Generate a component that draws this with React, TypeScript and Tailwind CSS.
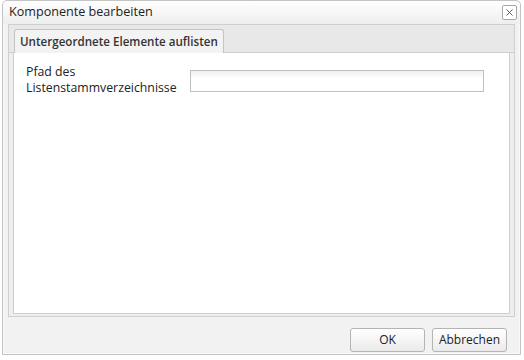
import { X } from 'lucide-react'

export default function App() {
  return (
    <div
      className="w-[524px] h-[360px] bg-white pl-[2px] pr-[3px] pb-[5px]"
      style={{ fontFamily: '"Open Sans", "Noto Sans", sans-serif' }}
    >
      <div className="h-full flex flex-col bg-[#f2f2f2] border border-[#c4c4c4] rounded-t-[5px] shadow-[inset_0_0_0_1px_#fafafa]">
        {/* title bar */}
        <div className="h-[23px] shrink-0 flex items-center justify-between pl-[6px] pr-[3px] bg-gradient-to-b from-white to-[#eeeeee] rounded-t-[5px]">
          <span className="text-[12.6px] text-[#222] leading-none">Komponente bearbeiten</span>
          <button className="w-[15px] h-[15px] flex items-center justify-center border border-[#a8a8a8] rounded-[2px] bg-white text-[#555]">
            <X size={11} strokeWidth={2} />
          </button>
        </div>

        <div className="flex-1 flex flex-col px-[5px]">
          <div className="flex-1 flex flex-col border border-[#cfcfcf]">
            {/* tab strip */}
            <div className="h-[28px] shrink-0 flex items-end pl-[5px] bg-[#e8e8e8] border-b border-[#cfcfcf]">
              <div className="h-[24px] px-[5px] flex items-center bg-[#f3f3f3] border border-b-0 border-[#c4c4c4] rounded-t-[3px] -mb-px">
                <span className="text-[11.6px] font-semibold text-[#333]">Untergeordnete Elemente auflisten</span>
              </div>
            </div>
            {/* content */}
            <div className="flex-1 bg-[#eeeeee] px-[4px] pb-[2px]">
              <div className="h-full bg-white border border-t-0 border-[#cfcfcf] px-[12px] pt-[11px]">
                <div className="flex items-start">
                  <div className="w-[164px] text-[12.3px] leading-[16px] text-[#222]">
                    Pfad des
                    <br />
                    Listenstammverzeichnisse
                  </div>
                  <input
                    className="mt-[6px] w-[294px] h-[22px] border border-[#bfbfbf] bg-gradient-to-b from-[#f0f0f0] to-white to-40% outline-none"
                    type="text"
                  />
                </div>
              </div>
            </div>
          </div>

          {/* footer */}
          <div className="h-[37px] shrink-0 flex items-end justify-end gap-[7px] pr-[8px] pb-[2px]">
            <button className="w-[75px] h-[24px] text-[12px] text-[#222] border border-[#b4b4b4] rounded-[3px] bg-gradient-to-b from-white to-[#ebebeb]">
              OK
            </button>
            <button className="w-[75px] h-[24px] text-[12px] text-[#222] border border-[#b4b4b4] rounded-[3px] bg-gradient-to-b from-white to-[#ebebeb]">
              Abbrechen
            </button>
          </div>
        </div>
      </div>
    </div>
  )
}
